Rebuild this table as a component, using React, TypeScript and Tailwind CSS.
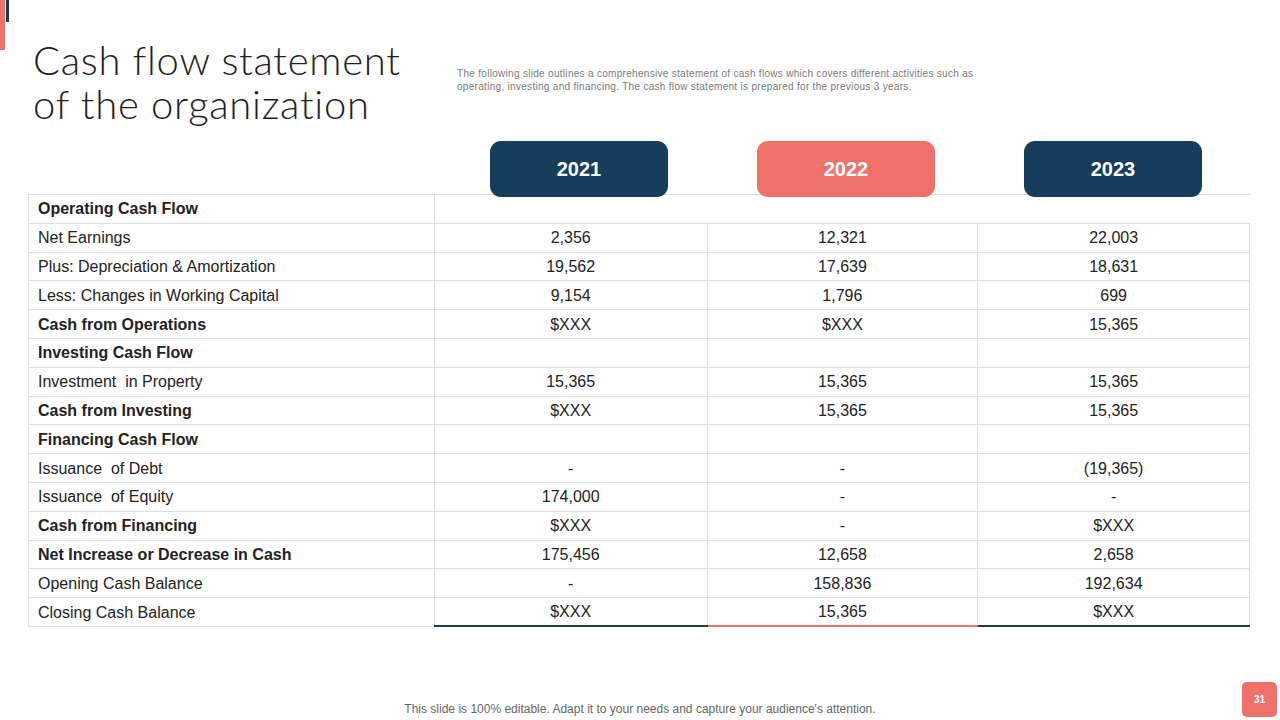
import React from "react";

// Cash flow statement slide — three-year comparison table.

type Row = {
  label: string;
  bold?: boolean;
  values?: [string, string, string];
  section?: boolean;
};

const rows: Row[] = [
  { label: "Operating Cash Flow", bold: true, section: true },
  { label: "Net Earnings", values: ["2,356", "12,321", "22,003"] },
  { label: "Plus: Depreciation & Amortization", values: ["19,562", "17,639", "18,631"] },
  { label: "Less: Changes in Working Capital", values: ["9,154", "1,796", "699"] },
  { label: "Cash from Operations", bold: true, values: ["$XXX", "$XXX", "15,365"] },
  { label: "Investing Cash Flow", bold: true, values: ["", "", ""] },
  { label: "Investment  in Property", values: ["15,365", "15,365", "15,365"] },
  { label: "Cash from Investing", bold: true, values: ["$XXX", "15,365", "15,365"] },
  { label: "Financing Cash Flow", bold: true, values: ["", "", ""] },
  { label: "Issuance  of Debt", values: ["-", "-", "(19,365)"] },
  { label: "Issuance  of Equity", values: ["174,000", "-", "-"] },
  { label: "Cash from Financing", bold: true, values: ["$XXX", "-", "$XXX"] },
  { label: "Net Increase or Decrease in Cash", bold: true, values: ["175,456", "12,658", "2,658"] },
  { label: "Opening Cash Balance", values: ["-", "158,836", "192,634"] },
  { label: "Closing Cash Balance", values: ["$XXX", "15,365", "$XXX"] },
];

const years = [
  { year: "2021", bg: "bg-[#173d5c]" },
  { year: "2022", bg: "bg-[#f0706a]" },
  { year: "2023", bg: "bg-[#173d5c]" },
];

const lastBorders = ["border-b-[#1d3a4f]", "border-b-[#f0706a]", "border-b-[#1d3a4f]"];

export default function App() {
  return (
    <div
      className="relative h-[720px] w-[1280px] overflow-hidden bg-white text-[#232323]"
      style={{ fontFamily: '"Liberation Sans", Arial, sans-serif' }}
    >
      {/* corner accents */}
      <div className="absolute left-0 top-0 h-[50px] w-[5px] bg-[#f0706a]" />
      <div className="absolute left-[6px] top-0 h-[22px] w-[3px] bg-[#1d3a4f]" />

      <div className="flex items-start pt-[38px]">
        <h1
          className="ml-[33px] w-[424px] text-[40px] font-light leading-[44px] tracking-[0.7px] text-[#1f1f1f]"
          style={{ fontFamily: "Lato, 'Open Sans', sans-serif" }}
        >
          Cash flow statement
          <br />
          of the organization
        </h1>
        <p className="mt-[29px] w-[560px] text-[10px] leading-[13px] tracking-[0.3px] text-[#7a7a7a]">
          The following slide outlines a comprehensive statement of cash flows which covers different activities such as
          <br />
          operating, investing and financing. The cash flow statement is prepared for the previous 3 years.
        </p>
      </div>

      <div className="relative z-10 ml-[490px] mt-[15px] flex gap-[89px]">
        {years.map((y) => (
          <div
            key={y.year}
            className={`flex h-[56px] w-[178px] items-center justify-center rounded-[11px] ${y.bg} text-[20px] font-bold text-white`}
            style={{ fontFamily: '"Liberation Sans Narrow", "Liberation Sans", sans-serif' }}
          >
            {y.year}
          </div>
        ))}
      </div>

      <table className="-mt-[3px] ml-[28px] w-[1222px] border-collapse text-[16px]">
        <colgroup>
          <col className="w-[406px]" />
          <col className="w-[273px]" />
          <col className="w-[271px]" />
          <col className="w-[272px]" />
        </colgroup>
        <tbody>
          {rows.map((r, i) => {
            const last = i === rows.length - 1;
            return (
              <tr key={r.label} className="h-[28.8px]">
                <td
                  className={`whitespace-pre border border-[#dedede] pb-0 pt-[1px] pl-[9px] ${r.bold ? "font-bold" : ""}`}
                >
                  {r.label}
                </td>
                {r.section ? (
                  <td colSpan={3} className="border-y border-l border-[#dedede]" />
                ) : (
                  r.values!.map((v, j) => (
                    <td
                      key={j}
                      className={`border border-[#dedede] pb-0 pt-[1px] text-center ${
                        last ? `border-b-2 ${lastBorders[j]}` : ""
                      }`}
                    >
                      {v}
                    </td>
                  ))
                )}
              </tr>
            );
          })}
        </tbody>
      </table>

      <div className="absolute bottom-[2px] left-0 right-0 text-center text-[12px] text-[#666]">
        This slide is 100% editable. Adapt it to your needs and capture your audience's attention.
      </div>
      <div className="absolute left-[1242px] top-[682px] flex h-[35px] w-[35px] items-center justify-center rounded-[5px] bg-[#f0706a] text-[10px] font-bold text-white">
        31
      </div>
    </div>
  );
}
